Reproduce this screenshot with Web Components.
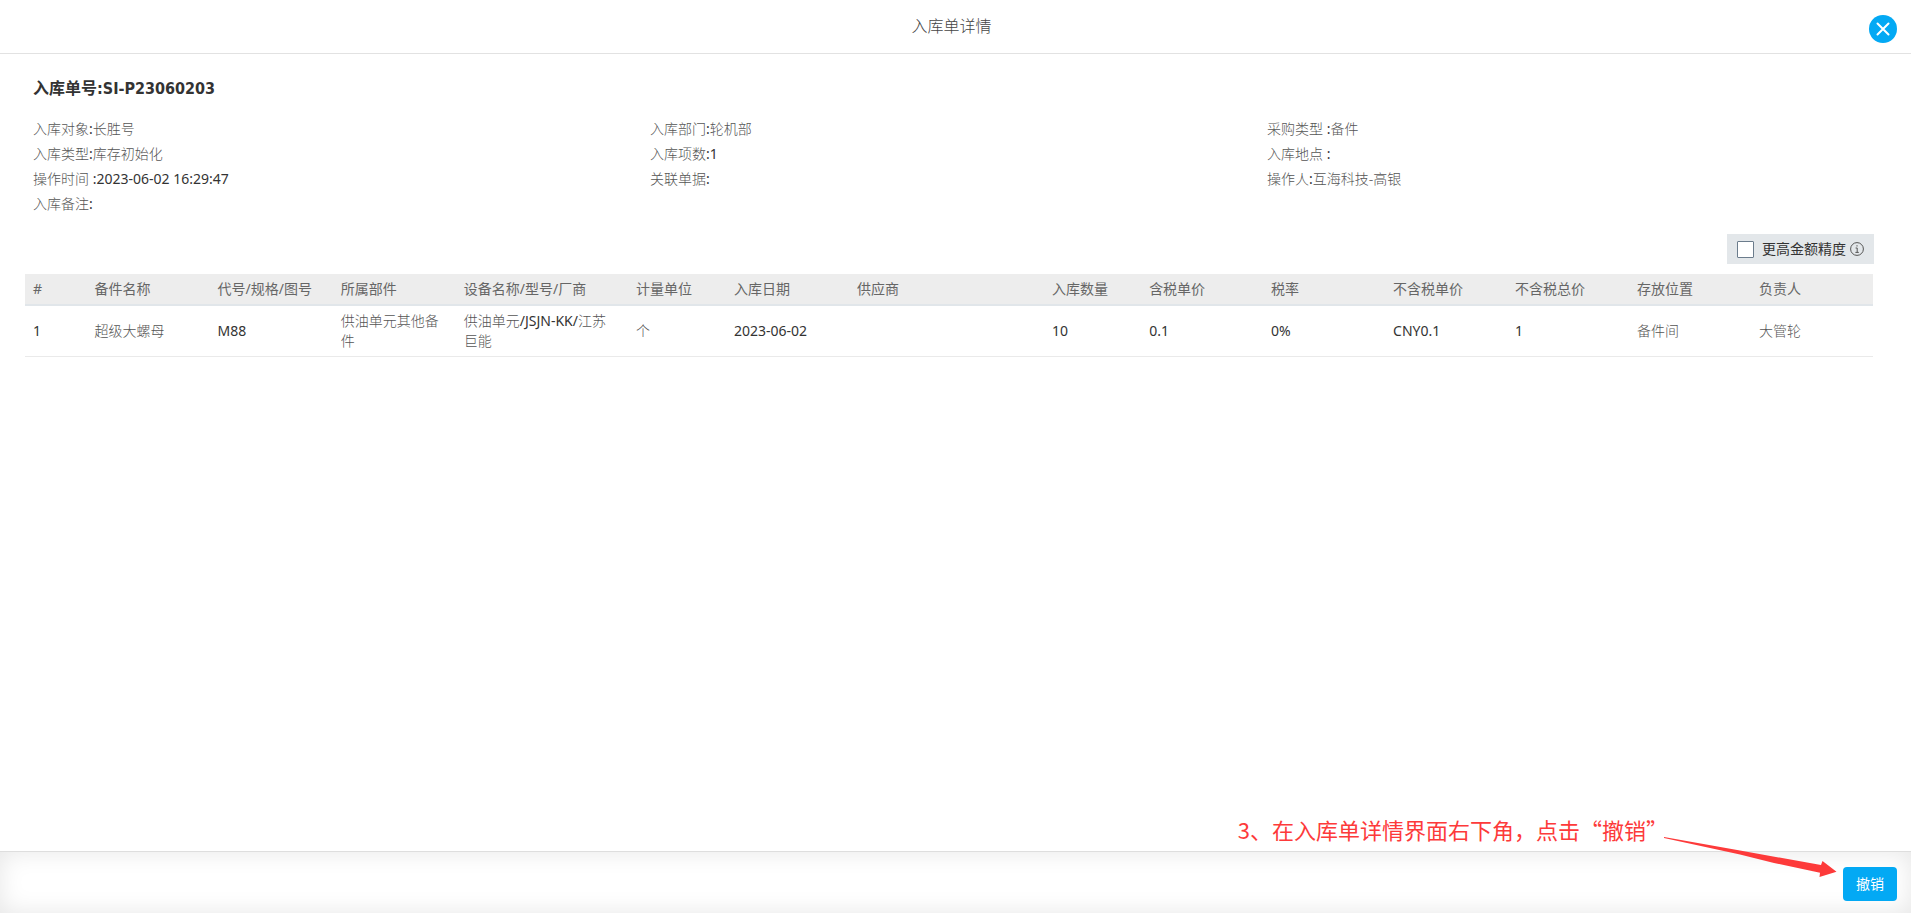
<!DOCTYPE html>
<html lang="zh-CN">
<head>
<meta charset="utf-8">
<meta name="viewport" content="width=device-width, initial-scale=1">
<title>入库单详情</title>
<style>
html, body { margin: 0; height: 100%; }
body { font-family: "Noto Sans", "Noto Sans CJK SC", sans-serif; font-size: 14px; line-height: 20px; color: #333; background: #fff; }
</style>
</head>
<body>
<stock-in-page></stock-in-page>
<script>
const define = (name, html, setup) => customElements.define(name, class extends HTMLElement {
  connectedCallback() {
    if (this.shadowRoot) return;
    const t = document.createElement('template');
    t.innerHTML = html;
    this.attachShadow({ mode: 'open' }).append(t.content.cloneNode(true));
    if (setup) setup(this, this.shadowRoot);
  }
});

define('dialog-header', `
<style>
:host { display: flex; align-items: flex-start; box-sizing: border-box; height: 54px; padding: 15px 14px 0 34px; border-bottom: 1px solid #e2e2e2; }
h1 { flex: 1; margin: 0; font-size: 16px; line-height: 22px; font-weight: 300; text-align: center; color: #444; }
button { width: 28px; height: 28px; padding: 0; border: 0; border-radius: 50%; background: #03a9f4; display: grid; place-items: center; cursor: pointer; }
</style>
<h1><slot></slot></h1>
<button type="button" aria-label="关闭"><svg width="14" height="14" viewBox="0 0 14 14" fill="none" stroke="#fff" stroke-width="2" stroke-linecap="round"><path d="M1.5 1.5l11 11M12.5 1.5l-11 11"/></svg></button>`);

define('info-item', `
<style>
:host { display: block; line-height: 25px; font-weight: 300; color: #555; }
b { font-weight: 400; color: #333; white-space: pre; }
:host([latin]) span { font-weight: 400; color: #333; }
</style><slot name="label"></slot><b>:</b><span><slot></slot></span>`, (el, root) => {
  if (el.hasAttribute('spaced')) root.querySelector('b').textContent = ' :';
});

define('order-summary', `
<style>
:host { display: block; padding: 25px 27px 0 33px; }
h2 { margin: 0 0 17px; font: bold 16px/20px "DejaVu Sans Condensed", "Noto Sans CJK SC", sans-serif; }
div { display: grid; grid-template-columns: repeat(3, 1fr); }
</style>
<h2>入库单号:SI-P23060203</h2>
<div>
<info-item><span slot="label">入库对象</span>长胜号</info-item>
<info-item><span slot="label">入库部门</span>轮机部</info-item>
<info-item spaced><span slot="label">采购类型</span>备件</info-item>
<info-item><span slot="label">入库类型</span>库存初始化</info-item>
<info-item latin><span slot="label">入库项数</span>1</info-item>
<info-item spaced><span slot="label">入库地点</span></info-item>
<info-item spaced latin><span slot="label">操作时间</span>2023-06-02 16:29:47</info-item>
<info-item><span slot="label">关联单据</span></info-item>
<info-item><span slot="label">操作人</span>互海科技-高银</info-item>
<info-item><span slot="label">入库备注</span></info-item>
</div>`);

define('precision-toggle', `
<style>
:host { display: flex; align-items: center; box-sizing: border-box; height: 30px; padding: 0 10px; background: #e3e7ea; }
label { display: flex; align-items: center; gap: 8px; }
input { appearance: none; width: 17px; height: 17px; margin: 0; border: 1px solid #6b7c8c; border-radius: 1px; background: #fff; }
input:checked { background: #03a9f4; }
svg { margin-left: 4px; }
</style>
<label><input type="checkbox"><span><slot></slot></span></label>
<svg width="14" height="14" viewBox="0 0 14 14" fill="none" stroke="#555"><circle cx="7" cy="7" r="6.4"/><path d="M7 3.2v1.3M5.6 6h1.6v4.3M5.4 10.4h3.4"/></svg>`);

define('parts-table', `
<style>
:host { display: block; }
table { width: 100%; table-layout: fixed; border-collapse: separate; border-spacing: 0; }
th, td { text-align: left; vertical-align: middle; padding: 5px 16px 5px 8px; white-space: nowrap; }
th { background: #ededed; font-weight: 400; color: #666; border-bottom: 2px solid #e1e6ea; }
td { height: 40px; white-space: normal; font-weight: 300; color: #555; border-bottom: 1px solid #eaeaea; }
b { font-weight: 400; color: #333; }
</style>
<table>
<colgroup></colgroup><thead><tr></tr></thead><tbody><tr></tr></tbody>
</table>`, (el, root) => {
  const columns = [
    ['#', 3.33, '1'], ['备件名称', 6.66, '超级大螺母'], ['代号/规格/图号', 6.66, 'M88'],
    ['所属部件', 6.66, '供油单元其他备件'], ['设备名称/型号/厂商', 9.32, '供油单元/JSJN-KK/江苏|巨能'],
    ['计量单位', 5.3, '个'], ['入库日期', 6.66, '2023-06-02'], ['供应商', 10.55, ''],
    ['入库数量', 5.26, '10'], ['含税单价', 6.6, '0.1'], ['税率', 6.6, '0%'],
    ['不含税单价', 6.6, 'CNY0.1'], ['不含税总价', 6.6, '1'], ['存放位置', 6.6, '备件间'], ['负责人', 6.6, '大管轮']
  ];
  // "|" marks a preferred break inside a cell
  const cell = s => s.replace(/[!-z]+/g, '<b>$&</b>').replace('|', '<wbr>');
  root.querySelector('colgroup').innerHTML = columns.map(c => `<col style="width:${c[1]}%">`).join('');
  root.querySelector('thead tr').innerHTML = columns.map(c => `<th scope="col">${c[0]}</th>`).join('');
  root.querySelector('tbody tr').innerHTML = columns.map(c => `<td>${cell(c[2])}</td>`).join('');
});

define('action-footer', `
<style>
:host { display: flex; justify-content: flex-end; align-items: flex-start; box-sizing: border-box; height: 62px; padding: 15px 14px 0; border-top: 1px solid #dedede; box-shadow: inset 0 0 24px rgba(0,0,0,.1); }
button { width: 54px; height: 34px; padding: 0; border: 0; border-radius: 4px; background: #03a9f4; color: #fff; font: inherit; cursor: pointer; }
</style>
<button type="button"><slot></slot></button>`);

define('guide-note', `
<style>
:host { position: absolute; right: 74px; bottom: 34px; display: flex; align-items: flex-start; pointer-events: none; color: #fd3a3a; }
p { margin: 0 -4px 0 0; font: 22px/30px "Noto Sans CJK SC", sans-serif; white-space: nowrap; }
svg { margin-top: 23px; }
</style>
<p><slot></slot></p>
<svg width="173" height="42" viewBox="0 0 173 42" fill="currentColor"><path d="M0 0L76 13.500L157 28L158.500 24L172.500 34.700L155.500 40L156 35.700L110 26L76 17.500L0 1Z"/></svg>`);

define('stock-in-page', `
<style>
:host { position: relative; display: flex; flex-direction: column; min-height: 100vh; }
main { flex: 1; }
.tools { display: flex; justify-content: flex-end; padding: 18px 37px 10px; }
parts-table { margin: 0 38px 0 25px; }
</style>
<dialog-header>入库单详情</dialog-header>
<main>
<order-summary></order-summary>
<div class="tools"><precision-toggle>更高金额精度</precision-toggle></div>
<parts-table></parts-table>
</main>
<action-footer>撤销</action-footer>
<guide-note>3、在入库单详情界面右下角，点击“撤销”</guide-note>`);
</script>
</body>
</html>
